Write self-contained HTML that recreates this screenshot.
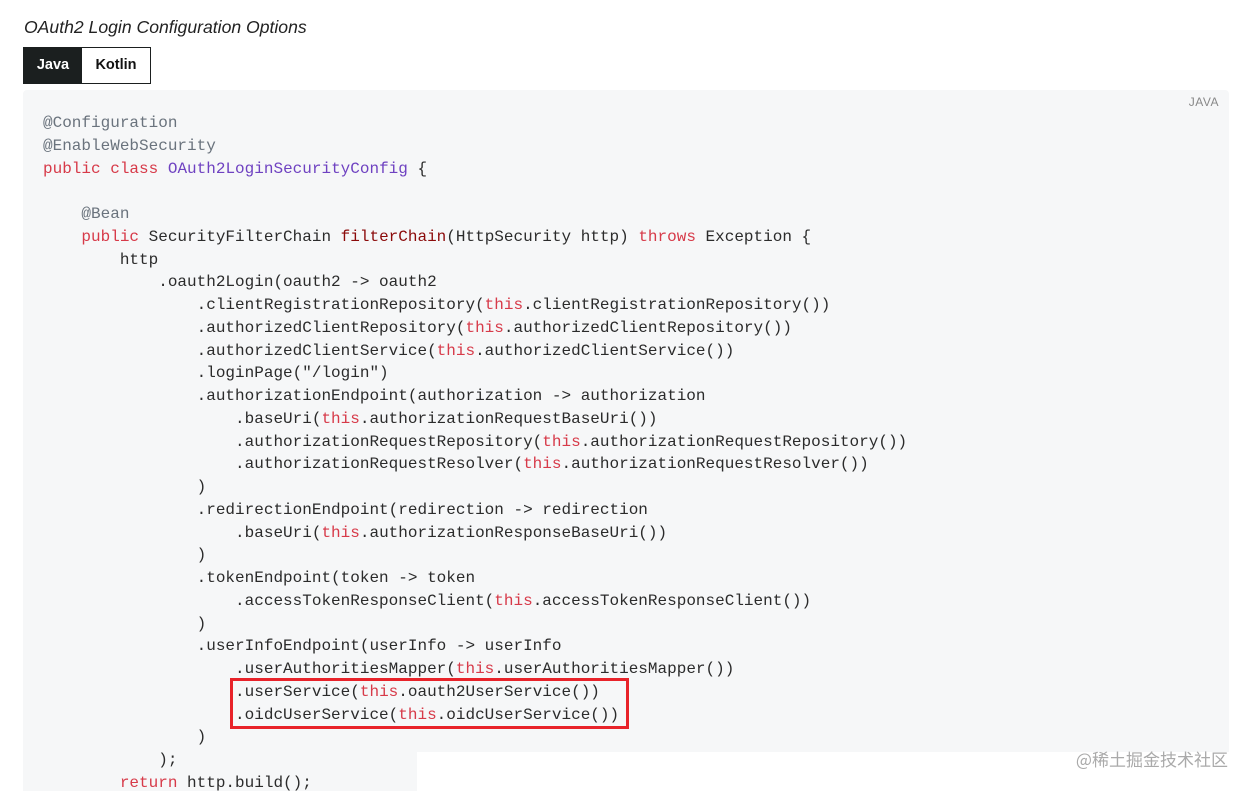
<!DOCTYPE html>
<html><head><meta charset="utf-8"><style>
html,body{margin:0;padding:0;background:#fff;width:1252px;height:791px;overflow:hidden;position:relative}
.title{position:absolute;left:24px;top:17px;font:italic 17.6px "Liberation Sans",sans-serif;color:#222}
.tabs{position:absolute;left:23px;top:47px;height:37px;display:flex;border:1px solid #1b1f1f;box-sizing:border-box;width:128px}
.tab{font:bold 14.5px "Liberation Sans",sans-serif;line-height:35px;text-align:center}
.t1{background:#1b1f1f;color:#fff;width:58px}
.t2{color:#111;flex:1}
.code{position:absolute;left:23px;top:90px;width:1206px;height:720px;background:#f6f7f8;border-radius:4px}
.lang{position:absolute;right:10px;top:5px;font:12px "Liberation Sans",sans-serif;color:#888;letter-spacing:.5px}
pre{position:absolute;left:20px;top:22px;margin:0;font:16px/22.75px "Liberation Mono",monospace;color:#2b2b2b;white-space:pre}
.a{color:#6a737d}.k{color:#d73a49}.c{color:#6f42c1}.f{color:#8b0a0a}
.box{position:absolute;left:230px;top:678px;width:399px;height:51px;border:3px solid #e8232a;box-sizing:border-box}
.wm{position:absolute;left:417px;top:752px;width:835px;height:39px;background:#fff}
.wmt{position:absolute;right:24px;top:746px;font:17px "Noto Sans CJK SC",sans-serif;color:#aaa}
</style></head><body>
<div class="title">OAuth2 Login Configuration Options</div>
<div class="tabs"><div class="tab t1">Java</div><div class="tab t2">Kotlin</div></div>
<div class="code"><div class="lang">JAVA</div>
<pre><span class="a">@Configuration</span>
<span class="a">@EnableWebSecurity</span>
<span class="k">public</span> <span class="k">class</span> <span class="c">OAuth2LoginSecurityConfig</span> {

    <span class="a">@Bean</span>
    <span class="k">public</span> SecurityFilterChain <span class="f">filterChain</span>(HttpSecurity http) <span class="k">throws</span> Exception {
        http
            .oauth2Login(oauth2 -&gt; oauth2
                .clientRegistrationRepository(<span class="k">this</span>.clientRegistrationRepository())
                .authorizedClientRepository(<span class="k">this</span>.authorizedClientRepository())
                .authorizedClientService(<span class="k">this</span>.authorizedClientService())
                .loginPage("/login")
                .authorizationEndpoint(authorization -&gt; authorization
                    .baseUri(<span class="k">this</span>.authorizationRequestBaseUri())
                    .authorizationRequestRepository(<span class="k">this</span>.authorizationRequestRepository())
                    .authorizationRequestResolver(<span class="k">this</span>.authorizationRequestResolver())
                )
                .redirectionEndpoint(redirection -&gt; redirection
                    .baseUri(<span class="k">this</span>.authorizationResponseBaseUri())
                )
                .tokenEndpoint(token -&gt; token
                    .accessTokenResponseClient(<span class="k">this</span>.accessTokenResponseClient())
                )
                .userInfoEndpoint(userInfo -&gt; userInfo
                    .userAuthoritiesMapper(<span class="k">this</span>.userAuthoritiesMapper())
                    .userService(<span class="k">this</span>.oauth2UserService())
                    .oidcUserService(<span class="k">this</span>.oidcUserService())
                )
            );
        <span class="k">return</span> http.build();
</pre></div>
<div class="box"></div>
<div class="wm"></div>
<div class="wmt">@稀土掘金技术社区</div>
</body></html>
